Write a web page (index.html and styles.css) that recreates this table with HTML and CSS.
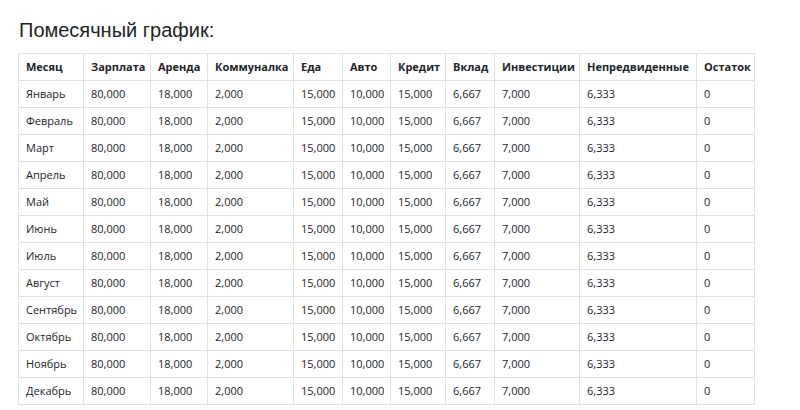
FILE: index.html
```html
<!DOCTYPE html>
<html lang="ru">
<head>
<meta charset="utf-8">
<link rel="stylesheet" href="styles.css">
</head>
<body>
<div class="page">
  <h2 class="title">Помесячный график:</h2>
  <table class="grid">
    <colgroup>
      <col class="c1"><col class="c2"><col class="c3"><col class="c4"><col class="c5"><col class="c6"><col class="c7"><col class="c8"><col class="c9"><col class="c10"><col class="c11">
    </colgroup>
    <thead>
      <tr><th>Месяц</th><th>Зарплата</th><th>Аренда</th><th>Коммуналка</th><th>Еда</th><th>Авто</th><th>Кредит</th><th>Вклад</th><th>Инвестиции</th><th>Непредвиденные</th><th>Остаток</th></tr>
    </thead>
    <tbody>
      <tr><td>Январь</td><td>80,000</td><td>18,000</td><td>2,000</td><td>15,000</td><td>10,000</td><td>15,000</td><td>6,667</td><td>7,000</td><td>6,333</td><td>0</td></tr>
      <tr><td>Февраль</td><td>80,000</td><td>18,000</td><td>2,000</td><td>15,000</td><td>10,000</td><td>15,000</td><td>6,667</td><td>7,000</td><td>6,333</td><td>0</td></tr>
      <tr><td>Март</td><td>80,000</td><td>18,000</td><td>2,000</td><td>15,000</td><td>10,000</td><td>15,000</td><td>6,667</td><td>7,000</td><td>6,333</td><td>0</td></tr>
      <tr><td>Апрель</td><td>80,000</td><td>18,000</td><td>2,000</td><td>15,000</td><td>10,000</td><td>15,000</td><td>6,667</td><td>7,000</td><td>6,333</td><td>0</td></tr>
      <tr><td>Май</td><td>80,000</td><td>18,000</td><td>2,000</td><td>15,000</td><td>10,000</td><td>15,000</td><td>6,667</td><td>7,000</td><td>6,333</td><td>0</td></tr>
      <tr><td>Июнь</td><td>80,000</td><td>18,000</td><td>2,000</td><td>15,000</td><td>10,000</td><td>15,000</td><td>6,667</td><td>7,000</td><td>6,333</td><td>0</td></tr>
      <tr><td>Июль</td><td>80,000</td><td>18,000</td><td>2,000</td><td>15,000</td><td>10,000</td><td>15,000</td><td>6,667</td><td>7,000</td><td>6,333</td><td>0</td></tr>
      <tr><td>Август</td><td>80,000</td><td>18,000</td><td>2,000</td><td>15,000</td><td>10,000</td><td>15,000</td><td>6,667</td><td>7,000</td><td>6,333</td><td>0</td></tr>
      <tr><td>Сентябрь</td><td>80,000</td><td>18,000</td><td>2,000</td><td>15,000</td><td>10,000</td><td>15,000</td><td>6,667</td><td>7,000</td><td>6,333</td><td>0</td></tr>
      <tr><td>Октябрь</td><td>80,000</td><td>18,000</td><td>2,000</td><td>15,000</td><td>10,000</td><td>15,000</td><td>6,667</td><td>7,000</td><td>6,333</td><td>0</td></tr>
      <tr><td>Ноябрь</td><td>80,000</td><td>18,000</td><td>2,000</td><td>15,000</td><td>10,000</td><td>15,000</td><td>6,667</td><td>7,000</td><td>6,333</td><td>0</td></tr>
      <tr><td>Декабрь</td><td>80,000</td><td>18,000</td><td>2,000</td><td>15,000</td><td>10,000</td><td>15,000</td><td>6,667</td><td>7,000</td><td>6,333</td><td>0</td></tr>
    </tbody>
  </table>
</div>
</body>
</html>
```
FILE: styles.css
```css
html, body {
  margin: 0;
  padding: 0;
  background: #ffffff;
}
.page {
  padding: 0 18px;
  color: #212529;
}
.title {
  margin: 18px 0 11px 1px;
  font-family: "Liberation Sans", Arial, sans-serif;
  font-size: 20px;
  line-height: 24px;
  font-weight: normal;
  color: #212529;
}
.grid {
  border-collapse: collapse;
  table-layout: fixed;
  width: 736px;
  font-family: "Open Sans", "Noto Sans", sans-serif;
  font-size: 11px;
  color: #212529;
}
.grid th, .grid td {
  border: 1px solid #dee2e6;
  padding: 4px 7px;
  line-height: 18px;
  text-align: left;
  white-space: nowrap;
  overflow: hidden;
  vertical-align: middle;
}
.grid th {
  font-weight: 700;
}
.c1 { width: 65px; }
.c2 { width: 67px; }
.c3 { width: 57px; }
.c4 { width: 86px; }
.c5 { width: 49px; }
.c6 { width: 48px; }
.c7 { width: 55px; }
.c8 { width: 49px; }
.c9 { width: 85px; }
.c10 { width: 117px; }
.c11 { width: 58px; }
```
